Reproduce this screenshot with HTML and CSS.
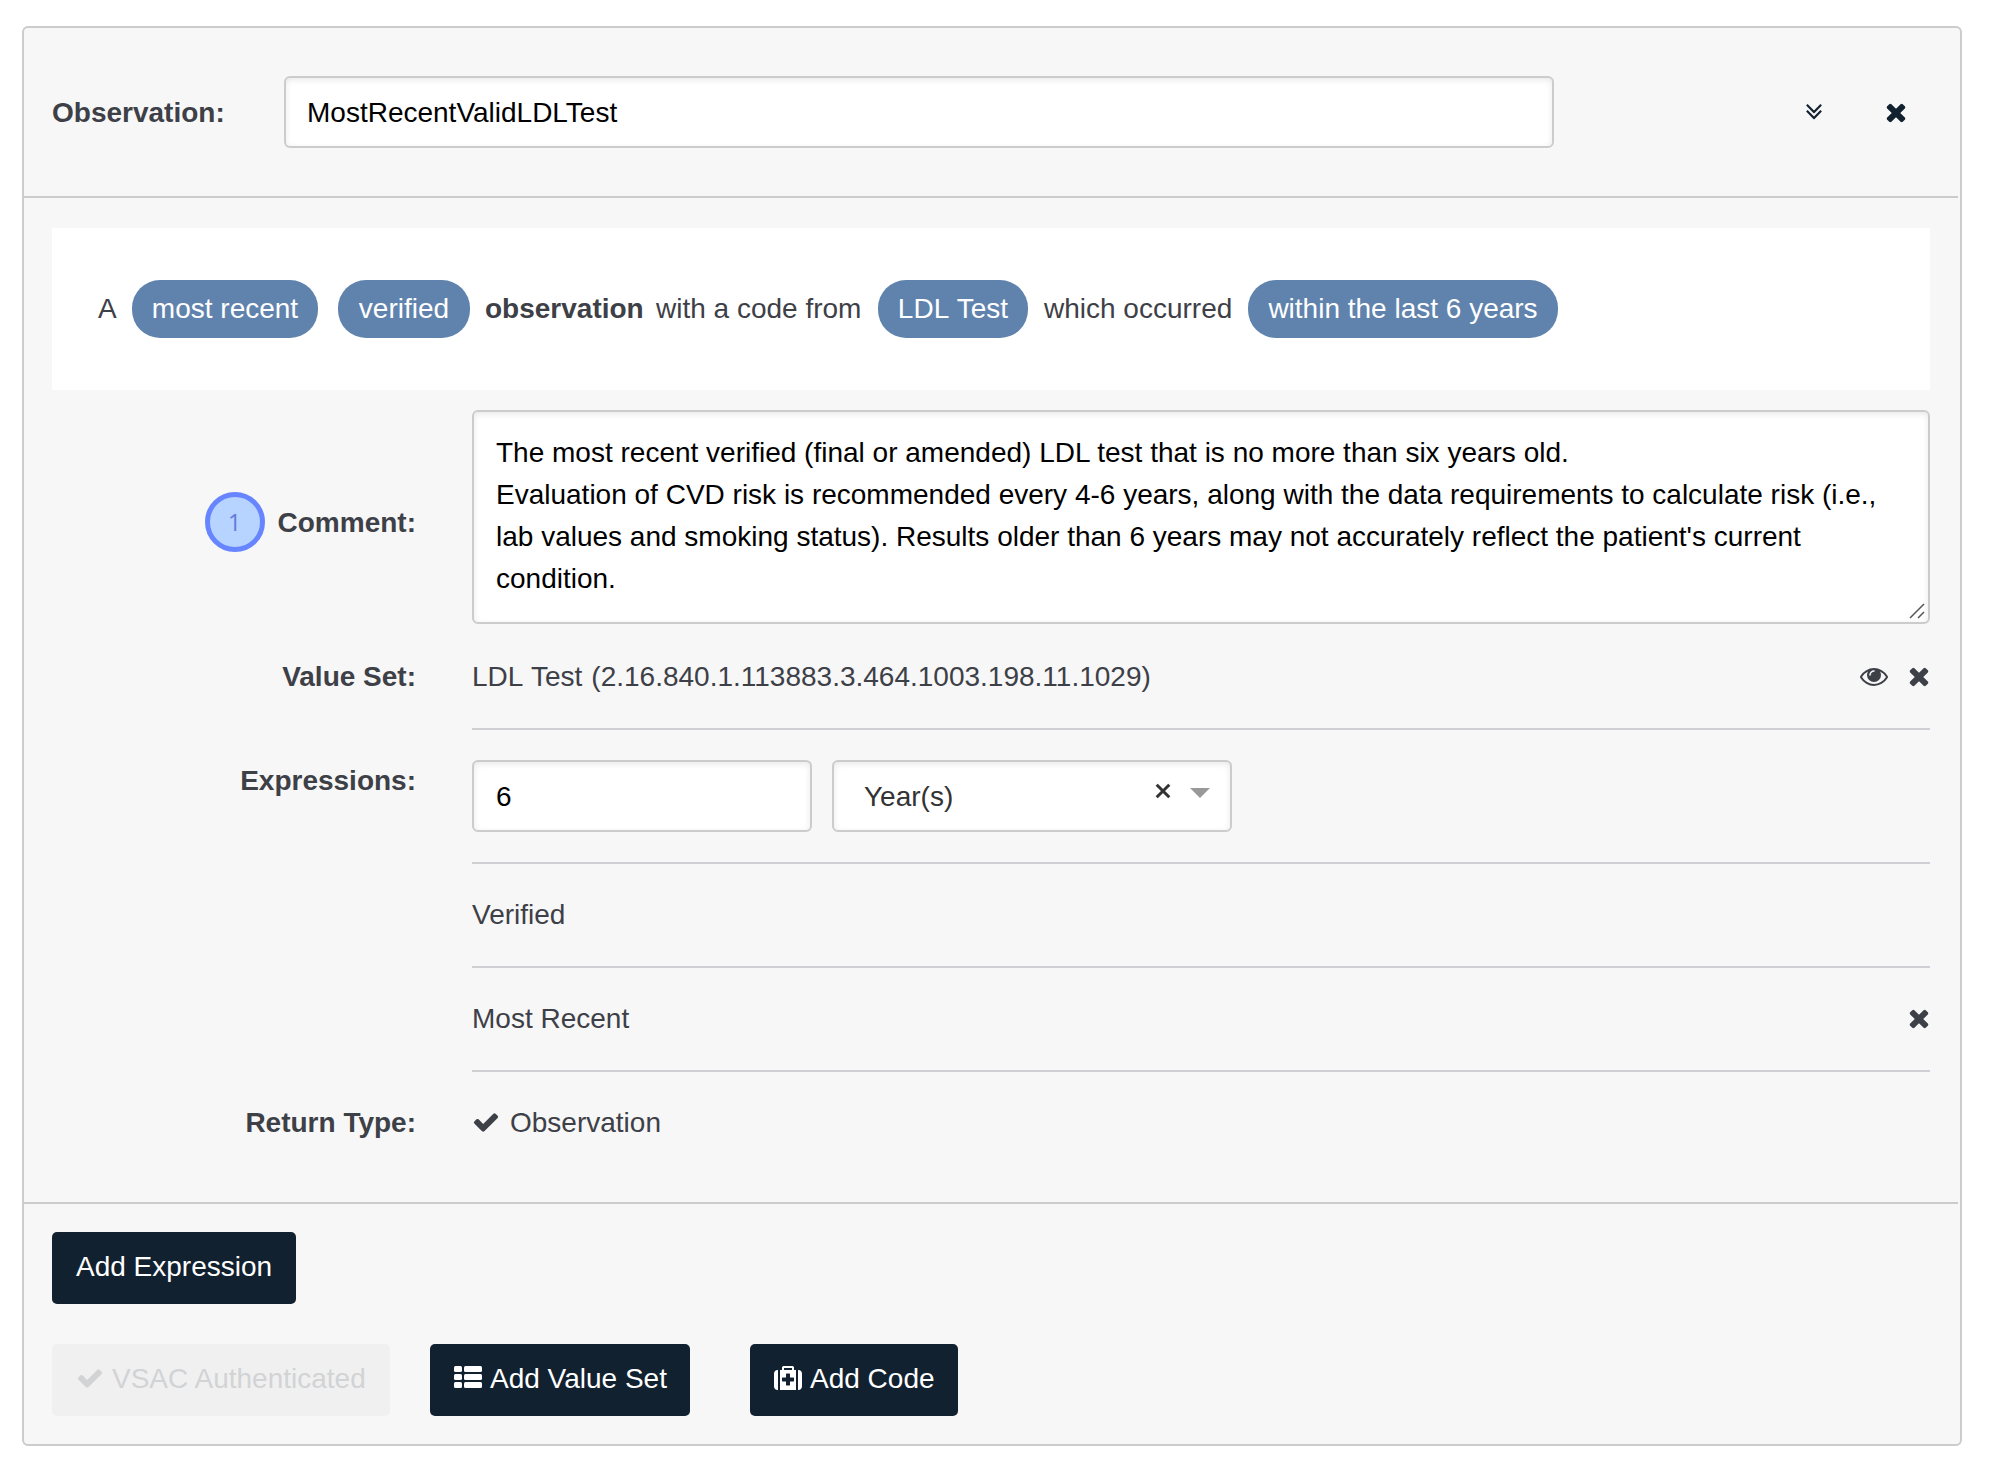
FILE: index.html
```html
<!DOCTYPE html>
<html lang="en">
<head>
<meta charset="utf-8">
<title>Observation</title>
<link rel="stylesheet" href="styles.css">
</head>
<body>
<svg class="defs" aria-hidden="true">
  <symbol id="times" viewBox="0 0 1792 1792"><path d="M1490 1322q0 40-28 68l-136 136q-28 28-68 28t-68-28l-294-294-294 294q-28 28-68 28t-68-28l-136-136q-28-28-28-68t28-68l294-294-294-294q-28-28-28-68t28-68l136-136q28-28 68-28t68 28l294 294 294-294q28-28 68-28t68 28l136 136q28 28 28 68t-28 68l-294 294 294 294q28 28 28 68z"/></symbol>
  <symbol id="check" viewBox="0 0 1792 1792"><path d="M1671 566q0 40-28 68l-724 724-136 136q-28 28-68 28t-68-28l-136-136-362-362q-28-28-28-68t28-68l136-136q28-28 68-28t68 28l294 295 656-657q28-28 68-28t68 28l136 136q28 28 28 68z"/></symbol>
  <symbol id="double-down" viewBox="0 0 1792 1792"><path d="M1395 864q0 13-10 23l-466 466q-10 10-23 10t-23-10l-466-466q-10-10-10-23t10-23l50-50q10-10 23-10t23 10l393 393 393-393q10-10 23-10t23 10l50 50q10 10 10 23zM1395 480q0 13-10 23l-466 466q-10 10-23 10t-23-10l-466-466q-10-10-10-23t10-23l50-50q10-10 23-10t23 10l393 393 393-393q10-10 23-10t23 10l50 50q10 10 10 23z"/></symbol>
  <symbol id="eye" viewBox="0 0 1792 1792"><path d="M1664 960q-152-236-381-353 61 104 61 225 0 185-131.5 316.5t-316.5 131.5-316.5-131.5-131.5-316.5q0-121 61-225-229 117-381 353 133 205 333.5 326.5t434.5 121.5 434.5-121.5 333.5-326.5zm-720-384q0-20-14-34t-34-14q-125 0-214.5 89.5t-89.5 214.5q0 20 14 34t34 14 34-14 14-34q0-86 61-147t147-61q20 0 34-14t14-34zm848 384q0 34-20 69-140 230-376.5 368.5t-499.5 138.5-499.5-139-376.5-368q-20-35-20-69t20-69q140-229 376.5-368t499.5-139 499.5 139 376.5 368q20 35 20 69z"/></symbol>
  <symbol id="th-list" viewBox="0 0 1792 1792"><rect y="128" width="512" height="384" rx="96"/><rect x="640" y="128" width="1152" height="384" rx="96"/><rect y="640" width="512" height="384" rx="96"/><rect x="640" y="640" width="1152" height="384" rx="96"/><rect y="1152" width="512" height="384" rx="96"/><rect x="640" y="1152" width="1152" height="384" rx="96"/></symbol>
  <symbol id="medkit" viewBox="0 0 1792 1792"><path d="M1280 1088v-192q0-14-9-23t-23-9h-224v-224q0-14-9-23t-23-9h-192q-14 0-23 9t-9 23v224h-224q-14 0-23 9t-9 23v192q0 14 9 23t23 9h224v224q0 14 9 23t23 9h192q14 0 23-9t9-23v-224h224q14 0 23-9t9-23zm-640-704h512v-128h-512v128zm-384 0v1280h-32q-92 0-158-66t-66-158v-832q0-92 66-158t158-66h32zm1152 0v1280h-1024v-1280h128v-160q0-40 28-68t68-28h576q40 0 68 28t28 68v160h128zm384 224v832q0 92-66 158t-158 66h-32v-1280h32q92 0 158 66t66 158z"/></symbol>
</svg>

<section class="card">
  <header class="card-header">
    <label class="header-label" for="name">Observation:</label>
    <input class="field name-field" id="name" type="text" value="MostRecentValidLDLTest">
    <div class="header-actions">
      <button class="icon-button" aria-label="Collapse"><svg class="icon"><use href="#double-down"/></svg></button>
      <button class="icon-button" aria-label="Delete"><svg class="icon"><use href="#times"/></svg></button>
    </div>
  </header>

  <div class="card-body">
    <div class="phrase">
      <span class="word-a">A</span>
      <span class="pill pill-recent">most recent</span>
      <span class="pill pill-verified">verified</span>
      <strong class="word-observation">observation</strong>
      <span class="word-with">with a code from</span>
      <span class="pill pill-test">LDL Test</span>
      <span class="word-which">which occurred</span>
      <span class="pill pill-within">within the last 6 years</span>
    </div>

    <div class="row comment-row">
      <div class="row-label comment-label"><span class="marker">1</span><span>Comment:</span></div>
      <div class="comment-box">
        <textarea class="field comment-field" aria-label="Comment">The most recent verified (final or amended) LDL test that is no more than six years old.
Evaluation of CVD risk is recommended every 4-6 years, along with the data requirements to calculate risk (i.e., lab values and smoking status). Results older than 6 years may not accurately reflect the patient's current condition.</textarea>
        <svg class="grip" viewBox="0 0 16 16"><path d="M1 15 15 1M9 15l6-6"/></svg>
      </div>
    </div>

    <div class="row">
      <div class="row-label">Value Set:</div>
      <div class="item">
        <span class="value-set">LDL Test (2.16.840.1.113883.3.464.1003.198.11.1029)</span>
        <span class="item-actions">
          <svg class="icon"><use href="#eye"/></svg>
          <svg class="icon icon-last"><use href="#times"/></svg>
        </span>
      </div>
    </div>

    <div class="row">
      <div class="row-label">Expressions:</div>
      <div class="items">
        <div class="item lookback">
          <input class="field number-field" type="text" value="6" aria-label="Value">
          <div class="field select">
            <span class="select-value">Year(s)</span>
            <svg class="select-clear" viewBox="0 0 16 16"><path d="M1.7 1.7 14.3 14.3M14.3 1.7 1.7 14.3"/></svg>
            <span class="select-arrow"></span>
          </div>
        </div>
        <div class="item"><span>Verified</span></div>
        <div class="item">
          <span>Most Recent</span>
          <span class="item-actions"><svg class="icon icon-last"><use href="#times"/></svg></span>
        </div>
      </div>
    </div>

    <div class="row">
      <div class="row-label">Return Type:</div>
      <div class="item return-item"><svg class="icon"><use href="#check"/></svg><span>Observation</span></div>
    </div>
  </div>

  <footer class="card-footer">
    <div class="buttons"><button class="button">Add Expression</button></div>
    <div class="buttons">
      <button class="button vsac" disabled><svg class="icon"><use href="#check"/></svg>VSAC Authenticated</button>
      <button class="button add-set"><svg class="icon"><use href="#th-list"/></svg>Add Value Set</button>
      <button class="button add-code"><svg class="icon"><use href="#medkit"/></svg>Add Code</button>
    </div>
  </footer>
</section>
</body>
</html>
```
FILE: styles.css
```css
* {
  box-sizing: border-box;
}

body {
  margin: 0;
  padding: 26px 28px 24px 22px;
  background: #fff;
  color: #3d4047;
  font: 28px/42px "Liberation Sans", Arial, sans-serif;
}

.defs {
  display: none;
}

.card {
  background: #f7f7f7;
  border: 2px solid #ccc;
  border-radius: 6px;
}

.card-header {
  display: flex;
  align-items: center;
  height: 170px;
  margin-right: 2px;
  padding: 0 48px 0 28px;
  border-bottom: 2px solid #ccc;
}

.header-label {
  width: 232px;
  padding-top: 2px;
  font-weight: 700;
}

.header-actions {
  display: flex;
  gap: 54px;
  margin-left: auto;
}

.icon {
  display: block;
  flex: none;
  width: 28px;
  height: 28px;
  fill: currentColor;
}

.icon-button {
  padding: 0;
  background: none;
  border: 0;
  color: #12212f;
}

.field {
  background: #fff;
  border: 2px solid #ccc;
  border-radius: 6px;
  box-shadow: inset 0 2px 6px rgba(0, 0, 0, 0.09);
  color: #000;
  font: inherit;
  outline: 0;
}

input.field {
  height: 72px;
  padding: 2px 22px 0;
}

input.name-field {
  width: 1270px;
  padding-left: 21px;
}

.card-body {
  height: 1006px;
  margin-right: 2px;
  padding: 30px 28px 0;
  border-bottom: 2px solid #ccc;
}

.phrase {
  display: flex;
  align-items: center;
  height: 162px;
  margin-bottom: 20px;
  padding-left: 46px;
  background: #fff;
  white-space: nowrap;
}

.pill {
  height: 58px;
  padding: 8px 0;
  background: #6083ae;
  border-radius: 28px;
  color: #fff;
  text-align: center;
}

.word-a { width: 34px; }
.pill-recent { width: 186px; margin-right: 20px; }
.pill-verified { width: 132px; margin-right: 15px; }
.word-observation { width: 171px; }
.word-with { width: 222px; }
.pill-test { width: 150px; margin-right: 16px; }
.word-which { width: 204px; }
.pill-within { width: 310px; }

.pill-test,
.value-set {
  word-spacing: 1.3px;
}

.row {
  display: grid;
  grid-template-columns: 364px 1458px;
  column-gap: 56px;
}

.row-label {
  padding-top: 30px;
  font-weight: 700;
  text-align: right;
}

.comment-row {
  margin-bottom: 2px;
}

.comment-label {
  display: flex;
  justify-content: flex-end;
  align-items: center;
  gap: 13px;
  height: 42px;
  margin-top: 92px;
  padding: 0;
}

.marker {
  display: flex;
  align-items: center;
  justify-content: center;
  width: 60px;
  height: 60px;
  margin-bottom: 2px;
  background: #b7d3ff;
  border: 5px solid #6685ff;
  border-radius: 50%;
  color: #6079dc;
  font: 23px/1 "Open Sans", sans-serif;
}

.comment-box {
  position: relative;
  height: 214px;
}

.comment-field {
  display: block;
  width: 100%;
  height: 100%;
  padding: 20px 22px;
  overflow: hidden;
  resize: none;
}

.grip {
  position: absolute;
  right: 5px;
  bottom: 5px;
  width: 16px;
  height: 16px;
  fill: none;
  stroke: #555;
  stroke-width: 1.5;
}

.item {
  display: flex;
  justify-content: space-between;
  padding: 30px 0;
  border-bottom: 2px solid #cfcfd4;
}

.item-actions {
  display: flex;
  gap: 17px;
  padding-top: 6px;
}

.icon-last {
  margin-right: -3px;
}

.lookback {
  justify-content: flex-start;
  gap: 20px;
}

.number-field {
  width: 340px;
}

.select {
  display: flex;
  width: 400px;
  height: 72px;
  padding: 14px 20px 0 30px;
  color: #333;
}

.select-value {
  flex: 1;
}

.select-clear {
  width: 16px;
  height: 16px;
  margin: 7px 19px 0 0;
  fill: none;
  stroke: #333;
  stroke-width: 3;
}

.select-arrow {
  margin-top: 12px;
  width: 20px;
  height: 10px;
  background: #999;
  clip-path: polygon(0 0, 100% 0, 50% 100%);
}

.return-item {
  justify-content: flex-start;
  gap: 10px;
  border: 0;
}

.return-item .icon {
  margin-top: 6px;
}

.card-footer {
  padding: 28px;
}

.buttons {
  display: flex;
}

.buttons + .buttons {
  margin-top: 40px;
}

.button {
  display: flex;
  gap: 8px;
  height: 72px;
  padding: 14px 0 0 24px;
  width: 244px;
  background: #12212f;
  border: 0;
  border-radius: 5px;
  color: #fff;
  font: inherit;
  white-space: nowrap;
}

.button .icon {
  margin-top: 6px;
}

.vsac {
  width: 338px;
  background: #f0f0f0;
  color: #d2d3d5;
}

.add-set {
  width: 260px;
  margin-left: 40px;
}

.add-code {
  width: 208px;
  margin-left: 60px;
}
```
